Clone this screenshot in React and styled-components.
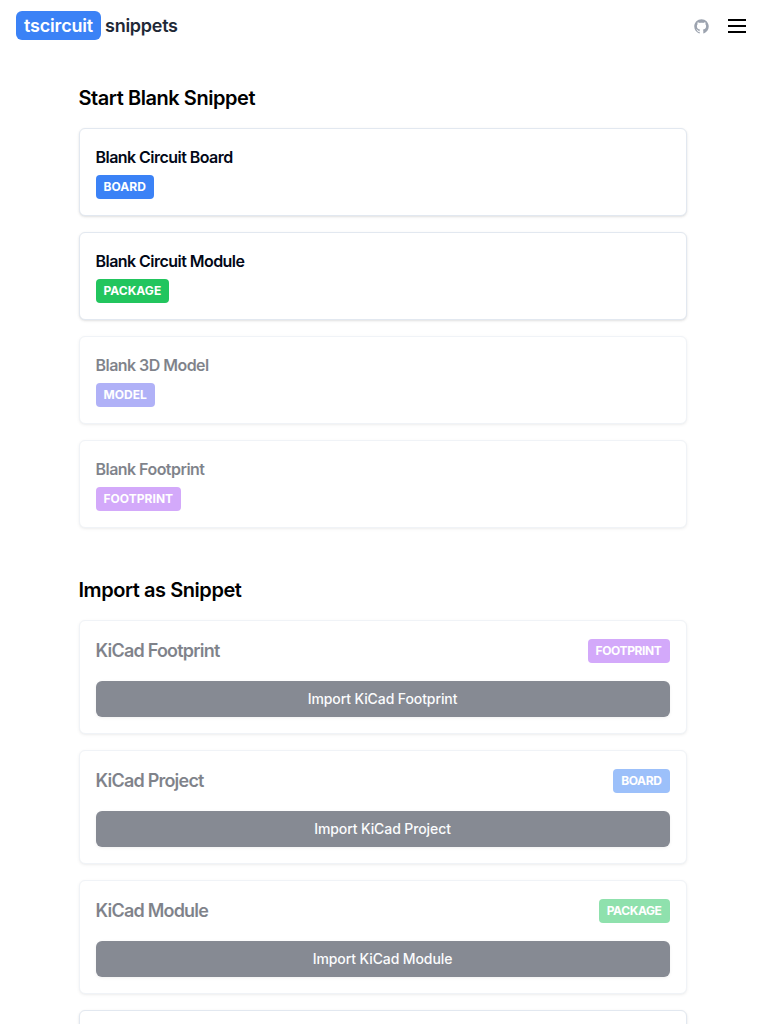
import React from "react";
import styled, { createGlobalStyle } from "styled-components";
import { RxGithubLogo } from "react-icons/rx";

const GlobalStyle = createGlobalStyle`
  *, *::before, *::after { box-sizing: border-box; }
  body {
    margin: 0;
    background: #fff;
    color: #000;
    font-family: Inter, "Liberation Sans", sans-serif;
    font-size: 16px;
    line-height: 24px;
    -webkit-font-smoothing: antialiased;
  }
  h2, h3 { margin: 0; }
`;

const Page = styled.div`
  height: 100vh;
  overflow: hidden;
`;

const Header = styled.header`
  display: flex;
  align-items: center;
  justify-content: space-between;
  height: 52px;
  padding: 0 16px;
`;

const Brand = styled.div`
  display: flex;
  gap: 4px;
  margin-bottom: 1px;
  font-size: 18px;
  line-height: 28px;
  font-weight: 600;
  color: #1f2937;
`;

const BrandMark = styled.span`
  height: 29px;
  padding: 1px 8px 0;
  border-radius: 6px;
  background: #3b82f6;
  color: #fff;
  letter-spacing: -0.18px;
`;

const BrandName = styled.span`
  padding-top: 1px;
  letter-spacing: -0.26px;
`;

const Actions = styled.div`
  display: flex;
  align-items: center;
  gap: 16px;
`;

const GithubIcon = styled(RxGithubLogo)`
  color: #9ca3af;
`;

const Main = styled.main`
  width: 608px;
  margin: 32px auto 0;
  display: flex;
  flex-direction: column;
  gap: 48px;
`;

const SectionTitle = styled.h2`
  margin-bottom: 16px;
  font-size: 20px;
  line-height: 28px;
  font-weight: 600;
  letter-spacing: -0.44px;
`;

const CardList = styled.div`
  display: flex;
  flex-direction: column;
  gap: 16px;
`;

const Card = styled.article`
  min-height: 88px;
  padding: 16px;
  border: 1px solid #e2e8f0;
  border-radius: 6px;
  background: #fff;
  box-shadow: 0 1px 3px rgba(0, 0, 0, 0.1), 0 1px 2px -1px rgba(0, 0, 0, 0.1);
  opacity: ${(p) => (p.$disabled ? 0.5 : 1)};
`;

const CardTitle = styled.h3`
  font-size: ${(p) => (p.$large ? "18px" : "16px")};
  line-height: ${(p) => (p.$large ? "28px" : "24px")};
  font-weight: 600;
  letter-spacing: ${(p) => (p.$large ? "-0.79px" : "-0.54px")};
  color: #020817;
`;

const badgeColors = {
  BOARD: "#3b82f6",
  PACKAGE: "#22c55e",
  MODEL: "#6366f1",
  FOOTPRINT: "#a855f7",
};

const Badge = styled.span`
  display: block;
  width: fit-content;
  padding: 4px 8px;
  border-radius: 4px;
  background: ${(p) => badgeColors[p.$type]};
  color: #fff;
  font-size: 12px;
  line-height: 16px;
  font-weight: 700;
  letter-spacing: ${(p) => (p.$tight ? "-0.38px" : "0.03px")};
`;

const BlankBody = styled.div`
  display: flex;
  flex-direction: column;
  gap: 6px;
`;

const ImportHeader = styled.div`
  display: flex;
  align-items: center;
  justify-content: space-between;
  margin-bottom: 16px;
`;

const ImportButton = styled.button`
  display: block;
  width: 100%;
  height: 36px;
  border: 0;
  border-radius: 6px;
  background: #0f172a;
  color: #f8fafc;
  font: 550 14px/20px Inter, "Liberation Sans", sans-serif;
  letter-spacing: -0.1px;
  box-shadow: 0 1px 3px rgba(0, 0, 0, 0.1);
`;

const blanks = [
  { name: "Blank Circuit Board", type: "BOARD" },
  { name: "Blank Circuit Module", type: "PACKAGE" },
  { name: "Blank 3D Model", type: "MODEL", disabled: true },
  { name: "Blank Footprint", type: "FOOTPRINT", disabled: true },
];

const imports = [
  { name: "KiCad Footprint", type: "FOOTPRINT" },
  { name: "KiCad Project", type: "BOARD" },
  { name: "KiCad Module", type: "PACKAGE" },
];

const MenuIcon = () => (
  <svg width="24" height="24" viewBox="0 0 24 24" fill="none" stroke="#000" strokeWidth="2" strokeLinecap="square">
    <path d="M4 6h16M4 12h16M4 18h16" />
  </svg>
);

export default function App() {
  return (
    <Page>
      <GlobalStyle />
      <Header>
        <Brand>
          <BrandMark>tscircuit</BrandMark>
          <BrandName>snippets</BrandName>
        </Brand>
        <Actions>
          <GithubIcon size={15} />
          <MenuIcon />
        </Actions>
      </Header>
      <Main>
        <section>
          <SectionTitle>Start Blank Snippet</SectionTitle>
          <CardList>
            {blanks.map((b) => (
              <Card key={b.name} $disabled={b.disabled}>
                <BlankBody>
                  <CardTitle>{b.name}</CardTitle>
                  <Badge $type={b.type}>{b.type}</Badge>
                </BlankBody>
              </Card>
            ))}
          </CardList>
        </section>
        <section>
          <SectionTitle>Import as Snippet</SectionTitle>
          <CardList>
            {imports.map((i) => (
              <Card key={i.name} $disabled>
                <ImportHeader>
                  <CardTitle $large>{i.name}</CardTitle>
                  <Badge $type={i.type} $tight>{i.type}</Badge>
                </ImportHeader>
                <ImportButton>Import {i.name}</ImportButton>
              </Card>
            ))}
            <Card />
          </CardList>
        </section>
      </Main>
    </Page>
  );
}
